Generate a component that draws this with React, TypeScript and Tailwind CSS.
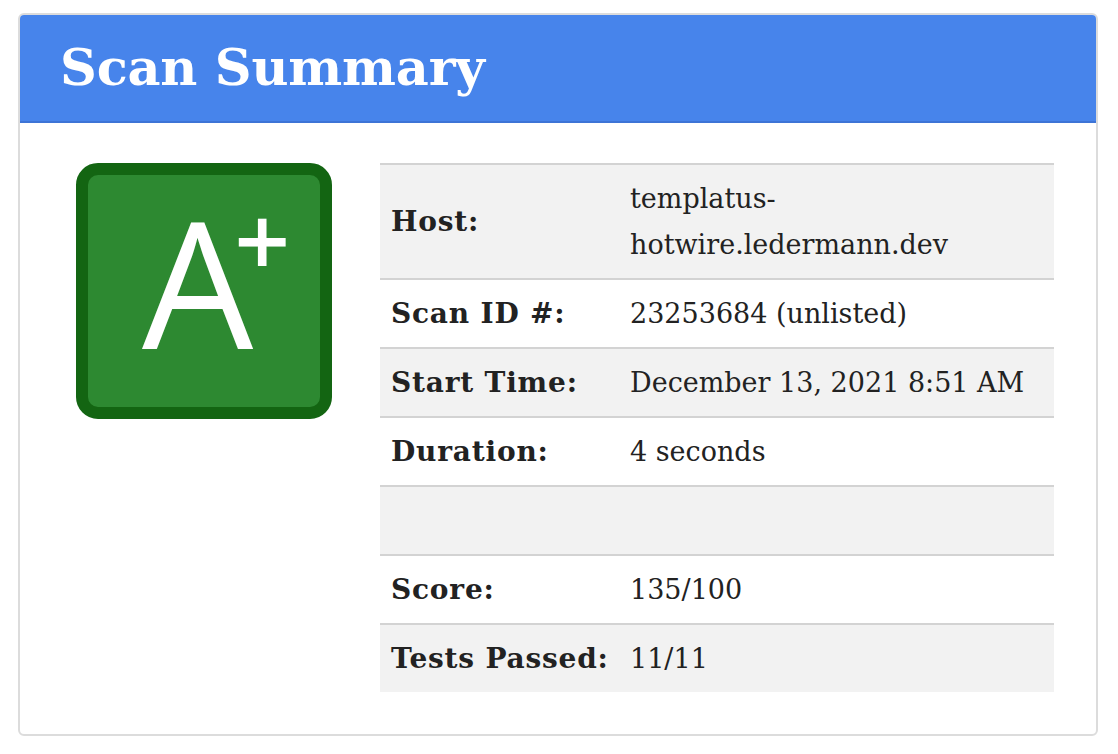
const rows: { label: string; value: string }[] = [
  { label: "Host:", value: "templatus-hotwire.ledermann.dev" },
  { label: "Scan ID #:", value: "23253684 (unlisted)" },
  { label: "Start Time:", value: "December 13, 2021 8:51 AM" },
  { label: "Duration:", value: "4 seconds" },
  { label: "", value: "" },
  { label: "Score:", value: "135/100" },
  { label: "Tests Passed:", value: "11/11" },
];

function GradeBox() {
  return (
    <div className="w-[256px] h-[256px] shrink-0 rounded-[22px] border-[12px] border-[#136512] bg-[#2d8931] text-white font-['Open_Sans',sans-serif] flex items-start pl-[54px] pt-[6px]">
      <span className="text-[176px] leading-[200px] font-normal">A</span>
      <span className="text-[98px] leading-[98px] font-semibold -ml-[19px] mt-[9px]">+</span>
    </div>
  );
}

export default function App() {
  return (
    <div className="w-[1118px] h-[754px] bg-white pt-[13px] pl-[18px]">
      <div className="w-[1080px] h-[723px] border-2 border-[#dcdcdc] rounded-[6px] overflow-hidden flex flex-col">
        {/* Header */}
        <div className="h-[108px] bg-[#4784eb] border-b-2 border-[#3d74d6] pl-[40px] flex items-center">
          <h1 className="text-white font-['DejaVu_Serif',serif] font-bold text-[51px] leading-none -mt-[2px] tracking-[-0.2px]">
            Scan Summary
          </h1>
        </div>

        {/* Body */}
        <div className="flex items-start pt-[40px] pl-[56px] gap-[48px]">
          <GradeBox />
          <table className="w-[674px] border-collapse font-['DejaVu_Serif',serif] text-[27px] text-[#222]">
            <tbody>
              {rows.map((r, i) => (
                <tr
                  key={i}
                  className={`${i % 2 === 0 ? "bg-[#f2f2f2]" : "bg-white"} ${i === 0 ? "border-t-2" : ""} ${
                    i < rows.length - 1 ? "border-b-2" : ""
                  } border-[#d3d3d3]`}
                >
                  <th className="w-[250px] text-left align-middle font-bold text-[28px] tracking-[0.8px] pl-[11px] py-[10.5px] leading-[46px]">
                    {r.label || "\u00a0"}
                  </th>
                  <td className="align-middle pl-[0px] pr-[8px] py-[10.5px] leading-[46px]">{r.value}</td>
                </tr>
              ))}
            </tbody>
          </table>
        </div>
      </div>
    </div>
  );
}
